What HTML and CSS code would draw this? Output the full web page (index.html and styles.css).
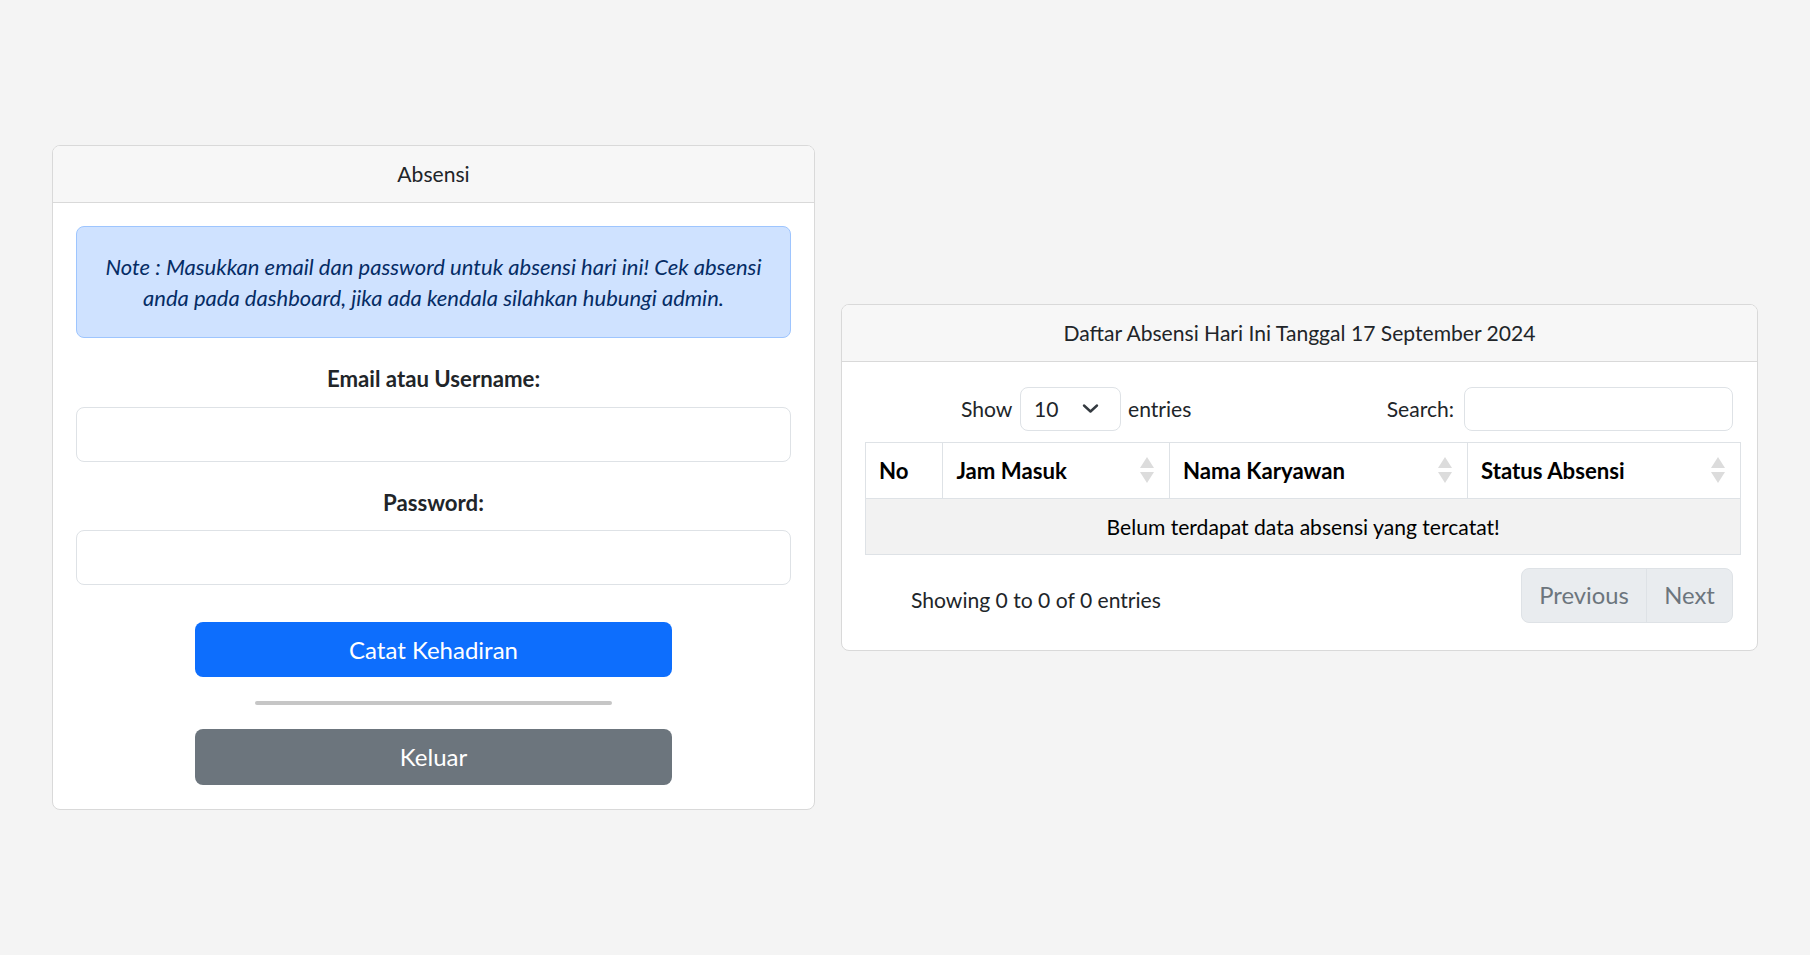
FILE: index.html
```html
<!DOCTYPE html>
<html lang="id">
<head>
<meta charset="utf-8">
<title>Absensi</title>
<link rel="stylesheet" href="styles.css">
</head>
<body>
<main class="page">
  <section class="card card-form">
    <header class="card-header">Absensi</header>
    <div class="card-body">
      <div class="alert">Note : Masukkan email dan password untuk absensi hari ini! Cek absensi<br>anda pada dashboard, jika ada kendala silahkan hubungi admin.</div>
      <form class="form">
        <label class="label" for="email">Email atau Username:</label>
        <input class="input" id="email" type="text">
        <label class="label" for="password">Password:</label>
        <input class="input input-last" id="password" type="password">
        <button class="btn btn-primary" type="button">Catat Kehadiran</button>
        <hr class="divider">
        <button class="btn btn-secondary" type="button">Keluar</button>
      </form>
    </div>
  </section>

  <section class="card card-table">
    <header class="card-header">Daftar Absensi Hari Ini Tanggal 17 September 2024</header>
    <div class="card-body">
      <div class="controls">
        <div class="length">
          <span>Show</span>
          <div class="select">
            <span>10</span>
            <svg class="chevron" width="17" height="11" viewBox="0 0 17 11" aria-hidden="true"><polyline points="2,2.5 8.5,8.5 15,2.5" fill="none" stroke="#343a40" stroke-width="2.4" stroke-linecap="round" stroke-linejoin="round"/></svg>
          </div>
          <span>entries</span>
        </div>
        <div class="filter">
          <label for="search">Search:</label>
          <input class="search" id="search" type="search">
        </div>
      </div>

      <table class="table">
        <colgroup>
          <col class="c-no"><col class="c-jam"><col class="c-nama"><col class="c-status">
        </colgroup>
        <thead>
          <tr>
            <th>No</th>
            <th><div class="th-inner"><span>Jam Masuk</span><svg class="sort" width="14" height="26" viewBox="0 0 14 26" aria-hidden="true"><polygon points="7,0 14,11 0,11" fill="#dcdcdc"/><polygon points="0,15 14,15 7,26" fill="#dcdcdc"/></svg></div></th>
            <th><div class="th-inner"><span>Nama Karyawan</span><svg class="sort" width="14" height="26" viewBox="0 0 14 26" aria-hidden="true"><polygon points="7,0 14,11 0,11" fill="#dcdcdc"/><polygon points="0,15 14,15 7,26" fill="#dcdcdc"/></svg></div></th>
            <th><div class="th-inner"><span>Status Absensi</span><svg class="sort" width="14" height="26" viewBox="0 0 14 26" aria-hidden="true"><polygon points="7,0 14,11 0,11" fill="#dcdcdc"/><polygon points="0,15 14,15 7,26" fill="#dcdcdc"/></svg></div></th>
          </tr>
        </thead>
        <tbody>
          <tr><td colspan="4" class="empty">Belum terdapat data absensi yang tercatat!</td></tr>
        </tbody>
      </table>

      <div class="footer">
        <div class="info">Showing 0 to 0 of 0 entries</div>
        <nav class="pagination">
          <span class="page-btn prev">Previous</span>
          <span class="page-btn next">Next</span>
        </nav>
      </div>
    </div>
  </section>
</main>
</body>
</html>
```
FILE: styles.css
```css
* { box-sizing: border-box; }
html, body { margin: 0; padding: 0; }
body {
  background: #f4f4f4;
  font-family: Lato, "Open Sans", sans-serif;
  font-size: 21.1px;
  line-height: 33.6px;
  color: #212529;
}
.page {
  min-height: 100vh;
  display: grid;
  grid-template-columns: 763px 917px;
  column-gap: 26px;
  align-items: center;
  padding: 0 52px;
}
.card {
  background: #fff;
  border: 1px solid #d9d9d9;
  border-radius: 8px;
  overflow: hidden;
}
.card-header {
  background: #f7f7f7;
  border-bottom: 1px solid #d9d9d9;
  padding: 11.2px 22px;
  line-height: 33.6px;
  text-align: center;
}
.card-form .card-body { padding: 23px 23px 24px; }
.alert {
  background: #cfe2ff;
  border: 1px solid #9ec5fe;
  border-radius: 8px;
  color: #052c65;
  font-style: italic;
  font-size: 22px;
  text-align: center;
  line-height: 31px;
  padding: 24px 6px;
  margin-bottom: 24px;
  white-space: nowrap;
}
.form { display: flex; flex-direction: column; }
.label {
  display: block;
  text-align: center;
  font-weight: 700;
  font-size: 22.2px;
  line-height: 33.6px;
  margin-bottom: 11px;
}
.input {
  display: block;
  width: 100%;
  height: 55px;
  border: 1px solid #dee2e6;
  border-radius: 8px;
  background: #fff;
  margin: 0 0 24px;
  font: inherit;
}
.input-last { margin-bottom: 36.6px; }
.btn {
  display: block;
  width: 477px;
  height: 55.5px;
  margin: 0 auto;
  border: none;
  border-radius: 8px;
  color: #fff;
  font-family: inherit;
  font-size: 24px;
  line-height: 1;
  padding: 0;
}
.btn-primary { background: #0d6efd; }
.btn-secondary { background: #6c757d; }
.divider {
  width: 357px;
  height: 4px;
  border: none;
  border-radius: 2px;
  background: #c6c6c6;
  margin: 24px auto;
}
.card-table .card-body { padding: 24.4px 16.3px 26.3px 23px; }
.controls {
  display: flex;
  justify-content: space-between;
  align-items: center;
  height: 44.6px;
  margin-bottom: 10.4px;
}
.length {
  display: flex;
  align-items: center;
  gap: 7.5px;
  margin-left: 96px;
}
.select {
  width: 100.6px;
  height: 43.6px;
  border: 1px solid #dee2e6;
  border-radius: 8px;
  display: flex;
  align-items: center;
  justify-content: space-between;
  padding: 0 21px 0 13px;
}
.chevron { display: block; }
.filter {
  display: flex;
  align-items: center;
  gap: 10px;
  margin-right: 7.7px;
}
.search {
  width: 269px;
  height: 44.6px;
  border: 1px solid #dee2e6;
  border-radius: 8px;
  background: #fff;
  font: inherit;
}
.table {
  width: 100%;
  border-collapse: collapse;
  table-layout: fixed;
  border: 1px solid #dee2e6;
}
.c-no { width: 77.4px; }
.c-jam { width: 226.6px; }
.c-nama { width: 298px; }
.c-status { width: 273.4px; }
.table th {
  height: 56.6px;
  text-align: left;
  font-weight: 700;
  font-size: 22.2px;
  padding: 0 15px 0 13px;
  border-left: 1px solid #dee2e6;
  border-bottom: 1px solid #dee2e6;
  color: #000;
}
.th-inner {
  display: flex;
  justify-content: space-between;
  align-items: center;
}
.sort { display: block; flex: none; }
.empty {
  height: 56px;
  text-align: center;
  background: #f2f2f2;
  color: #000;
  padding: 0;
}
.footer {
  display: flex;
  justify-content: space-between;
  align-items: flex-start;
  margin-top: 12.6px;
}
.info { margin-left: 46px; padding-top: 15px; line-height: 33.6px; }
.pagination {
  display: flex;
  height: 55.7px;
  margin-right: 7.7px;
  border: 1px solid #dee2e6;
  border-radius: 8px;
  overflow: hidden;
  background: #e9ecef;
}
.page-btn {
  display: flex;
  align-items: center;
  justify-content: center;
  color: #6c757d;
  font-size: 23.8px;
}
.prev { width: 125px; border-right: 1px solid #dee2e6; }
.next { width: 85px; }
```
